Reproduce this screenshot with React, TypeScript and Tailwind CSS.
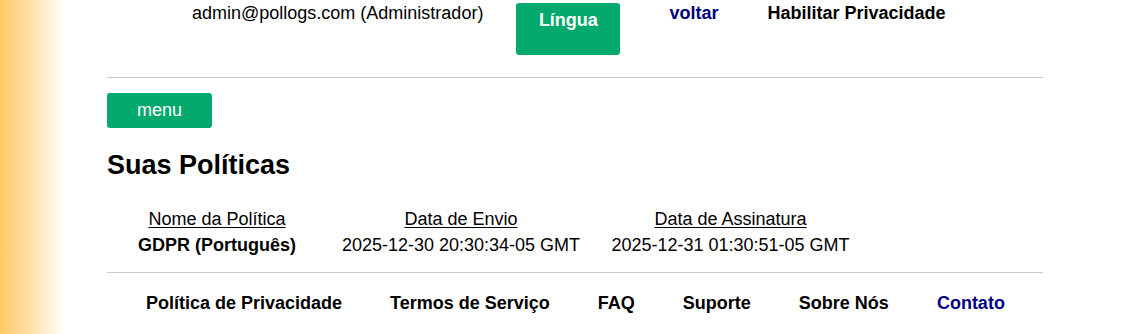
import React from "react";

export default function App() {
  const font = { fontFamily: '"Liberation Sans", Arial, sans-serif' };
  return (
    <div className="flex w-[1139px] h-[334px] bg-white overflow-hidden text-black" style={font}>
      <div className="w-[64px] h-full shrink-0 bg-gradient-to-r from-[#ffc864] via-[#ffe0a8] to-white" />
      <div className="ml-[43px] w-[936px] flex flex-col">
        <div className="flex items-start pt-0 pl-[85px] text-[18px] leading-[21px]">
          <span className="pt-[3px] whitespace-nowrap">admin@pollogs.com (Administrador)</span>
          <button className="ml-[33px] mt-[3px] w-[104px] h-[52px] rounded-[3px] bg-[#04a96d] text-white font-bold flex justify-center pt-[7px] text-[18px] leading-[21px]">
            Língua
          </button>
          <a className="ml-[49px] pt-[3px] font-bold text-[#000080] whitespace-nowrap">voltar</a>
          <span className="ml-[49px] pt-[3px] font-bold whitespace-nowrap">Habilitar Privacidade</span>
        </div>
        <div className="mt-[22px] h-px bg-[#cccccc]" />
        <button className="mt-[15px] w-[105px] h-[35px] rounded-[3px] bg-[#04a96d] text-white text-[18px] leading-[21px] flex items-center justify-center">
          menu
        </button>
        <h2 className="mt-[22px] text-[27px] leading-[31px] font-bold">Suas Políticas</h2>
        <div className="mt-[28px] ml-[11px] grid grid-cols-[198px_290px_249px] gap-y-[5px] text-[18px] leading-[21px] whitespace-nowrap">
          <span className="text-center underline underline-offset-[2px]">Nome da Política</span>
          <span className="text-center underline underline-offset-[2px]">Data de Envio</span>
          <span className="text-center underline underline-offset-[2px]">Data de Assinatura</span>
          <span className="text-center font-bold">GDPR (Português)</span>
          <span className="text-center">2025-12-30 20:30:34-05 GMT</span>
          <span className="text-center">2025-12-31 01:30:51-05 GMT</span>
        </div>
        <div className="mt-[16px] h-px bg-[#cccccc]" />
        <div className="mt-[20px] pl-[39px] flex gap-[48px] text-[18px] leading-[21px] font-bold whitespace-nowrap">
          <span>Política de Privacidade</span>
          <span>Termos de Serviço</span>
          <span>FAQ</span>
          <span>Suporte</span>
          <span>Sobre Nós</span>
          <span className="text-[#000080]">Contato</span>
        </div>
      </div>
    </div>
  );
}
